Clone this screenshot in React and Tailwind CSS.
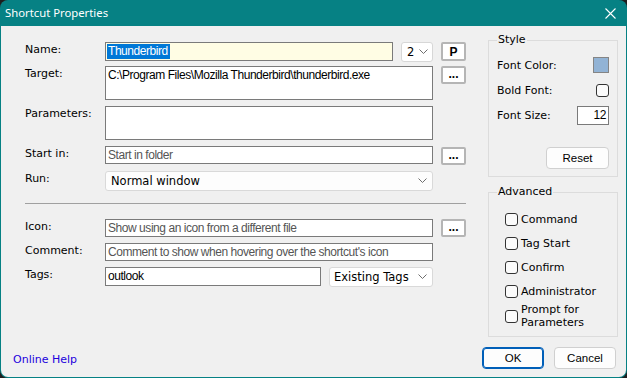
import React from "react";

const LBL = "font-['DejaVu_Sans',sans-serif] text-[11px] leading-[13px] text-black";
const INP = "font-['Liberation_Sans',sans-serif] text-[12px] tracking-[-0.45px] leading-[15px] whitespace-nowrap overflow-hidden";
const DD = "font-['DejaVu_Sans',sans-serif] text-[11.5px] leading-[14px] text-black";
const BTN = "font-['Liberation_Sans',sans-serif] text-[11.5px] leading-[14px] text-black";

function Chevron() {
  return (
    <svg width="9" height="6" viewBox="0 0 9 6" className="shrink-0">
      <polyline points="0.5,0.5 4.5,4.5 8.5,0.5" fill="none" stroke="#6e6e6e" strokeWidth="1" />
    </svg>
  );
}

function Browse() {
  return (
    <div className="w-[25px] h-[18px] border-2 border-[#b5b5b5] rounded-[2px] bg-white flex items-center justify-center">
      <span className="font-['Liberation_Sans',sans-serif] font-bold text-[12px] leading-[10px] pb-[3px] text-black">...</span>
    </div>
  );
}

function Label({ children }) {
  return <div className={`w-[80px] shrink-0 pt-[1px] ${LBL}`}>{children}</div>;
}

function Check({ children }) {
  return (
    <div className="flex items-center gap-[3px]">
      <div className="w-[13px] h-[13px] rounded-[3px] border border-[#333] bg-[#fbfbfb] shrink-0" />
      <div className={LBL}>{children}</div>
    </div>
  );
}

export default function App() {
  return (
    <div className="w-[627px] h-[378px] bg-[#1e1e1e]">
      <div className="w-[627px] h-[378px] bg-[#068184] rounded-[8px] overflow-hidden flex flex-col px-[1px] pb-[1px]">
        {/* Title bar */}
        <div className="h-[26px] shrink-0 flex items-center justify-between pl-[4px] pr-[10px]">
          <span className="font-['Noto_Sans',sans-serif] text-[11.3px] leading-[16px] text-white">Shortcut Properties</span>
          <svg width="11" height="11" viewBox="0 0 11 11">
            <path d="M0.5 0.5 L10.5 10.5 M10.5 0.5 L0.5 10.5" stroke="#ffffff" strokeWidth="1.1" />
          </svg>
        </div>

        {/* Body */}
        <div className="flex-1 bg-[#f0f0f0] rounded-b-[7px] flex flex-col">
          <div className="flex">
            {/* Left form */}
            <div className="pl-[24px] pt-[16px] w-[465px] shrink-0 flex flex-col">
              {/* Name */}
              <div className="flex items-start h-[20px]">
                <Label>Name:</Label>
                <div className={`w-[288px] h-[19px] border border-[#7a7a7a] bg-[#fffde4] pl-[1px] flex items-center ${INP}`}>
                  <span className="bg-[#0078d7] text-white pl-[1px] pr-[2px]">Thunderbird</span>
                </div>
                <div className="ml-[8px] w-[32px] h-[20px] border border-[#d7d7d7] rounded-[3px] bg-white flex items-center justify-between pl-[5px] pr-[4px]">
                  <span className={DD}>2</span>
                  <Chevron />
                </div>
                <div className="ml-[8px] w-[25px] h-[19px] border-2 border-[#b5b5b5] rounded-[2px] bg-white flex items-center justify-center">
                  <span className="font-['Liberation_Sans',sans-serif] font-bold text-[12px] leading-[12px] text-black">P</span>
                </div>
              </div>
              {/* Target */}
              <div className="flex items-start mt-[4px]">
                <Label>Target:</Label>
                <div className={`w-[328px] h-[34px] border border-[#7a7a7a] bg-white pl-[2px] pt-[1px] text-black ${INP}`}>
                  C:\Program Files\Mozilla Thunderbird\thunderbird.exe
                </div>
                <div className="ml-[8px]"><Browse /></div>
              </div>
              {/* Parameters */}
              <div className="flex items-start mt-[6px]">
                <Label>Parameters:</Label>
                <div className="w-[328px] h-[34px] border border-[#7a7a7a] bg-white" />
              </div>
              {/* Start in */}
              <div className="flex items-start mt-[6px]">
                <Label>Start in:</Label>
                <div className={`w-[328px] h-[18px] border border-[#7a7a7a] bg-white pl-[2px] flex items-center text-[#555555] ${INP}`}>
                  Start in folder
                </div>
                <div className="ml-[8px] mt-[1px]"><Browse /></div>
              </div>
              {/* Run */}
              <div className="flex items-start mt-[6px]">
                <Label>Run:</Label>
                <div className="w-[328px] h-[20px] border border-[#d9d9d9] rounded-[3px] bg-[#fdfdfd] flex items-center justify-between pl-[5px] pr-[5px]">
                  <span className={DD}>Normal window</span>
                  <Chevron />
                </div>
              </div>
              {/* Separator */}
              <div className="mt-[12px] h-px w-[441px] bg-[#a0a0a0]" />
              {/* Icon */}
              <div className="flex items-start mt-[15px]">
                <Label>Icon:</Label>
                <div className={`w-[328px] h-[18px] border border-[#7a7a7a] bg-white pl-[2px] flex items-center text-[#555555] ${INP}`}>
                  Show using an icon from a different file
                </div>
                <div className="ml-[8px]"><Browse /></div>
              </div>
              {/* Comment */}
              <div className="flex items-start mt-[6px]">
                <Label>Comment:</Label>
                <div className={`w-[328px] h-[18px] border border-[#7a7a7a] bg-white pl-[2px] flex items-center text-[#555555] ${INP}`}>
                  Comment to show when hovering over the shortcut's icon
                </div>
              </div>
              {/* Tags */}
              <div className="flex items-start mt-[6px]">
                <Label>Tags:</Label>
                <div className={`w-[216px] h-[19px] border border-[#7a7a7a] bg-white pl-[2px] flex items-center text-black ${INP}`}>
                  outlook
                </div>
                <div className="ml-[8px] w-[104px] h-[20px] border border-[#d9d9d9] rounded-[3px] bg-white flex items-center justify-between pl-[4px] pr-[5px]">
                  <span className={DD}>Existing Tags</span>
                  <Chevron />
                </div>
              </div>
            </div>

            {/* Right column */}
            <div className="ml-[22px] w-[130px] shrink-0 flex flex-col">
              <fieldset className="mt-[7px] border border-[#dcdcdc] pl-[8px] pr-[8px] pb-[7px]">
                <legend className={`px-[1px] ${LBL} leading-[14px]`}>Style</legend>
                <div className="mt-[10px] flex items-center justify-between h-[16px]">
                  <span className={LBL}>Font Color:</span>
                  <div className="w-[16px] h-[16px] border border-[#858585] bg-[#92b3d5]" />
                </div>
                <div className="mt-[11px] flex items-center justify-between h-[13px]">
                  <span className={LBL}>Bold Font:</span>
                  <div className="w-[13px] h-[13px] rounded-[3px] border border-[#333] bg-[#fbfbfb]" />
                </div>
                <div className="mt-[9px] flex items-center justify-between h-[19px]">
                  <span className={LBL}>Font Size:</span>
                  <div className={`w-[32px] h-[19px] border border-[#7a7a7a] bg-white flex items-center justify-end pr-[2px] text-black ${INP}`}>
                    12
                  </div>
                </div>
                <div className="mt-[22px] flex justify-end">
                  <div className="w-[63px] h-[22px] border border-[#d0d0d0] rounded-[4px] bg-[#fdfdfd] flex items-center justify-center">
                    <span className={BTN}>Reset</span>
                  </div>
                </div>
              </fieldset>
              <fieldset className="mt-[8px] border border-[#dcdcdc] pl-[16px] pr-[4px] pb-[7px]">
                <legend className={`px-[1px] -ml-[8px] ${LBL} leading-[14px]`}>Advanced</legend>
                <div className="mt-[13px] flex flex-col gap-[10px]">
                  <div className="h-[14px] flex items-center"><Check>Command</Check></div>
                  <div className="h-[14px] flex items-center"><Check>Tag Start</Check></div>
                  <div className="h-[14px] flex items-center"><Check>Confirm</Check></div>
                  <div className="h-[14px] flex items-center"><Check>Administrator</Check></div>
                </div>
                <div className="mt-[5px] flex items-center gap-[3px]">
                  <div className="w-[13px] h-[13px] rounded-[3px] border border-[#333] bg-[#fbfbfb] shrink-0" />
                  <div className={LBL}>Prompt for<br />Parameters</div>
                </div>
              </fieldset>
            </div>
          </div>

          {/* Bottom row */}
          <div className="mt-auto mb-[8px] flex items-center justify-between pl-[12px] pr-[10px]">
            <span className="pt-[3px] font-['DejaVu_Sans',sans-serif] text-[11px] leading-[13px] text-[#2200dd]">Online Help</span>
            <div className="flex gap-[10px]">
              <div className="w-[62px] h-[22px] border border-[#005fb8] shadow-[inset_0_0_0_1px_#005fb8] rounded-[4px] bg-[#fdfdfd] flex items-center justify-center">
                <span className={BTN}>OK</span>
              </div>
              <div className="w-[62px] h-[22px] border border-[#d0d0d0] rounded-[4px] bg-[#fdfdfd] flex items-center justify-center">
                <span className={BTN}>Cancel</span>
              </div>
            </div>
          </div>
        </div>
      </div>
    </div>
  );
}
